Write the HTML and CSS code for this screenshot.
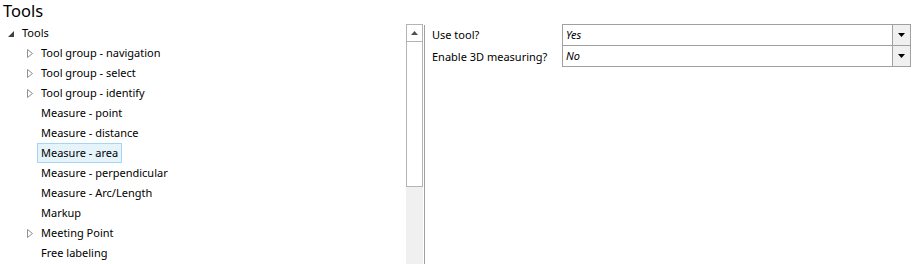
FILE: index.html
```html
<!DOCTYPE html>
<html>
<head>
<meta charset="utf-8">
<link rel="stylesheet" href="styles.css">
</head>
<body>
<div class="title">Tools</div>
<div class="main">
  <div class="tree">
    <div class="row lvl0"><span class="exp"><svg width="6" height="6" viewBox="0 0 6 6"><polygon points="6,0 6,6 0,6" fill="#404040"/></svg></span><span class="lbl">Tools</span></div>
    <div class="row lvl1"><span class="exp"><svg width="6" height="9" viewBox="0 0 6 9"><polygon points="0.5,0.5 5.5,4.5 0.5,8.5" fill="none" stroke="#909090" stroke-width="1"/></svg></span><span class="lbl">Tool group - navigation</span></div>
    <div class="row lvl1"><span class="exp"><svg width="6" height="9" viewBox="0 0 6 9"><polygon points="0.5,0.5 5.5,4.5 0.5,8.5" fill="none" stroke="#909090" stroke-width="1"/></svg></span><span class="lbl">Tool group - select</span></div>
    <div class="row lvl1"><span class="exp"><svg width="6" height="9" viewBox="0 0 6 9"><polygon points="0.5,0.5 5.5,4.5 0.5,8.5" fill="none" stroke="#909090" stroke-width="1"/></svg></span><span class="lbl">Tool group - identify</span></div>
    <div class="row lvl1"><span class="exp"></span><span class="lbl">Measure - point</span></div>
    <div class="row lvl1"><span class="exp"></span><span class="lbl">Measure - distance</span></div>
    <div class="row lvl1"><span class="exp"></span><span class="lbl sel">Measure - area</span></div>
    <div class="row lvl1"><span class="exp"></span><span class="lbl">Measure - perpendicular</span></div>
    <div class="row lvl1"><span class="exp"></span><span class="lbl">Measure - Arc/Length</span></div>
    <div class="row lvl1"><span class="exp"></span><span class="lbl">Markup</span></div>
    <div class="row lvl1"><span class="exp"><svg width="6" height="9" viewBox="0 0 6 9"><polygon points="0.5,0.5 5.5,4.5 0.5,8.5" fill="none" stroke="#909090" stroke-width="1"/></svg></span><span class="lbl">Meeting Point</span></div>
    <div class="row lvl1"><span class="exp"></span><span class="lbl">Free labeling</span></div>
  </div>
  <div class="scrollbar">
    <div class="sb-up"><svg width="7" height="4" viewBox="0 0 7 4"><polygon points="3.5,0 7,4 0,4" fill="#505050"/></svg></div>
    <div class="sb-thumb"></div>
    <div class="sb-track"></div>
  </div>
  <div class="divider"></div>
  <div class="props">
    <div class="prow">
      <div class="plabel">Use tool?</div>
      <div class="pvalue"><span class="ptext">Yes</span><span class="pbtn"><svg width="7" height="4" viewBox="0 0 7 4"><polygon points="0,0 7,0 3.5,4" fill="#000"/></svg></span></div>
    </div>
    <div class="prow">
      <div class="plabel">Enable 3D measuring?</div>
      <div class="pvalue"><span class="ptext">No</span><span class="pbtn"><svg width="7" height="4" viewBox="0 0 7 4"><polygon points="0,0 7,0 3.5,4" fill="#000"/></svg></span></div>
    </div>
  </div>
</div>
</body>
</html>
```
FILE: styles.css
```css
html, body {
  margin: 0;
  padding: 0;
  background: #fff;
  overflow: hidden;
}
body {
  font-family: "Noto Sans", "Open Sans", sans-serif;
  font-size: 11px;
  color: #000;
  width: 913px;
  height: 264px;
}
.title {
  font-size: 16.5px;
  height: 23px;
  line-height: 22px;
  padding-left: 3px;
}
.main {
  display: flex;
  height: 241px;
}
.tree {
  width: 406px;
  flex: none;
}
.row {
  height: 20px;
  display: flex;
  align-items: center;
}
.exp {
  width: 14px;
  flex: none;
  display: flex;
  align-items: center;
  padding-left: 1px;
}
.lvl0 { padding-left: 7px; }
.lvl1 { padding-left: 26px; }
.lvl0 .exp { padding-top: 1px; }
.lbl {
  line-height: 18px;
  padding: 0 3px;
  margin-left: -4px;
  border: 1px solid transparent;
}
.sel {
  background: #e5f3fb;
  border-color: #a5d6f5;
}
.scrollbar {
  width: 17px;
  flex: none;
  margin-top: 1px;
  display: flex;
  flex-direction: column;
}
.sb-up {
  height: 16px;
  border: 1px solid #b4b4b4;
  background: #fff;
  display: flex;
  justify-content: center;
  align-items: center;
  box-sizing: content-box;
  width: 15px;
}
.sb-thumb {
  height: 144px;
  width: 15px;
  border: 1px solid #b4b4b4;
  border-top: none;
  background: #fff;
}
.sb-track {
  flex: 1;
  background: #f0f0f0;
}
.divider {
  width: 1px;
  flex: none;
  margin-left: 1px;
  margin-top: 2px;
  background: #a0a0a0;
}
.props {
  flex: 1;
  padding-top: 1px;
}
.prow {
  display: flex;
  height: 21px;
}
.prow:first-child {
  height: 22px;
}
.plabel {
  width: 130px;
  padding-left: 7px;
  flex: none;
  line-height: 21px;
}
.pvalue {
  width: 347px;
  flex: none;
  display: flex;
  border: 1px solid #a0a0a0;
  border-top: none;
  background: #fff;
}
.prow:first-child .pvalue {
  border-top: 1px solid #a0a0a0;
}
.ptext {
  flex: 1;
  font-style: italic;
  padding-left: 3px;
  line-height: 20px;
}
.pbtn {
  width: 17px;
  flex: none;
  background: #f0f0f0;
  border-left: 1px solid #a0a0a0;
  display: flex;
  justify-content: center;
  align-items: center;
}
```
